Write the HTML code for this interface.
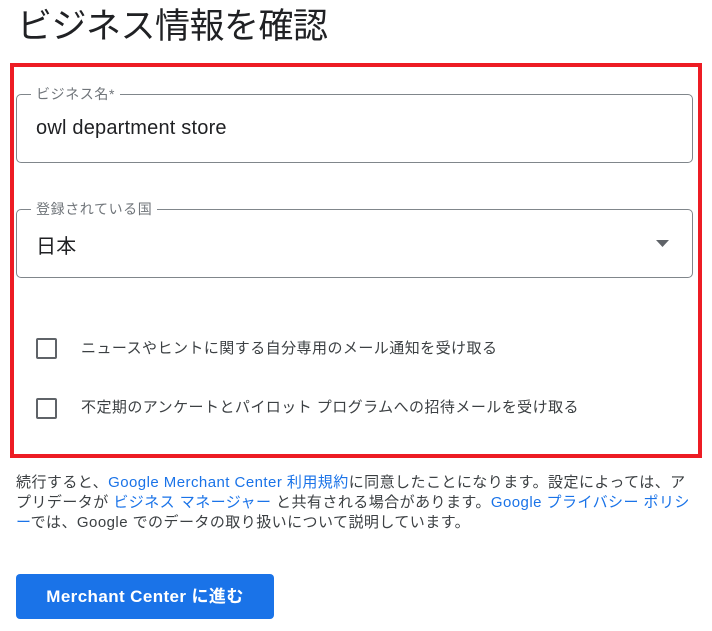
<!DOCTYPE html>
<html><head><meta charset="utf-8"><style>
*{margin:0;padding:0;box-sizing:border-box}
body{width:712px;height:631px;background:#fff;font-family:"Liberation Sans","Noto Sans CJK JP",sans-serif;color:#202124;position:relative;overflow:hidden}
.abs{position:absolute}
h1{position:absolute;left:17px;top:3px;font-size:35px;font-weight:400;line-height:48px;color:#202124;letter-spacing:-0.5px}
.red{position:absolute;left:10px;top:63px;width:692px;height:395px;border:4px solid #ed1c24}
.field{position:absolute;left:16px;width:677px;border:1px solid #80868b;border-radius:5px}
.lab{position:absolute;left:14px;top:-11px;background:#fff;padding:0 5px;font-size:14px;color:#70757a;line-height:20px;letter-spacing:0.6px}
.val{position:absolute;left:19px;font-size:20px;color:#202124;letter-spacing:0.2px}
.cb{position:absolute;left:36px;width:21px;height:21px;border:2px solid #5f6368;border-radius:2px}
.ct{position:absolute;left:81px;font-size:15px;color:#3c4043;line-height:20px;letter-spacing:0.45px}
.p{position:absolute;left:16px;top:473px;font-size:15px;line-height:20px;color:#3c4043;white-space:nowrap;letter-spacing:0.45px}
a{color:#1a73e8;text-decoration:none}
.btn{position:absolute;left:16px;top:574px;width:258px;height:45px;background:#1a73e8;border-radius:4px;color:#fff;font-weight:bold;font-size:17px;text-align:center;line-height:45px;letter-spacing:0.4px}
</style></head><body>
<h1>ビジネス情報を確認</h1>
<div class="red"></div>
<div class="field" style="top:94px;height:69px"><span class="lab">ビジネス名*</span><span class="val" style="top:22px">owl department store</span></div>
<div class="field" style="top:209px;height:69px"><span class="lab">登録されている国</span><span class="val" style="top:20px">日本</span>
<svg class="abs" style="left:639px;top:30px" width="14" height="8"><path d="M0 0H13L6.5 7Z" fill="#5f6368"/></svg></div>
<div class="cb" style="top:338px"></div><div class="ct" style="top:339px">ニュースやヒントに関する自分専用のメール通知を受け取る</div>
<div class="cb" style="top:398px"></div><div class="ct" style="top:398px">不定期のアンケートとパイロット プログラムへの招待メールを受け取る</div>
<div class="p">続行すると、<a>Google Merchant Center 利用規約</a>に同意したことになります。設定によっては、ア<br>プリデータが <a>ビジネス マネージャー</a> と共有される場合があります。<a>Google プライバシー ポリシ</a><br><a>ー</a>では、Google でのデータの取り扱いについて説明しています。</div>
<div class="btn">Merchant Center に進む</div>
</body></html>
